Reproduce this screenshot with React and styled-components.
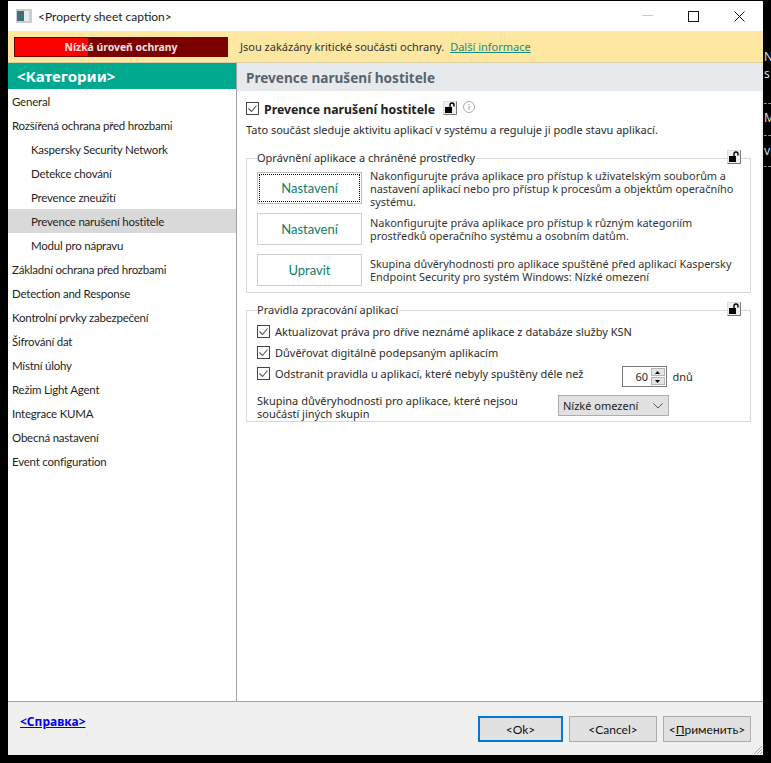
import React from 'react';
import styled, { createGlobalStyle } from 'styled-components';

const Global = createGlobalStyle`
  html, body { margin: 0; padding: 0; background: #000; width: 771px; height: 763px; overflow: hidden; }
  * { box-sizing: border-box; }
`;
const Screen = styled.div`
  display: flex; width: 771px; height: 763px; padding: 1px 0 8px 8px; background: #000;
  font-family: "Noto Sans", sans-serif; font-size: 11px; color: #2b2b2b;
`;
const Win = styled.div`
  width: 755px; flex: none; display: flex; flex-direction: column; background: #fff; position: relative;
`;
const Side = styled.div`
  flex: 1; min-width: 0; overflow: hidden; display: flex; flex-direction: column; color: #ddd; padding: 46px 0 0 1px;
`;
const Frag = styled.div`
  height: ${p => p.$h}px; flex: none; border-bottom: 1px dashed #999; padding-top: ${p => p.$pt}px; line-height: ${p => p.$lh || 14}px; font-size: 12px; white-space: pre-line;
`;
const Title = styled.div`
  height: 30px; display: flex; align-items: center; padding-left: 8px; font-size: 12px; color: #222; flex: none;
`;
const TitleText = styled.span` margin-left: 6px; font-family: Lato, sans-serif; font-size: 12px; `;
const WinBtns = styled.div` margin-left: auto; display: flex; align-items: center; padding-right: 1px; `;
const WinBtn = styled.div` width: 46px; height: 30px; display: flex; align-items: center; justify-content: center; `;
const Banner = styled.div`
  height: 32px; flex: none; background: #FEE8A1; border-bottom: 1px solid #d9cfa3; display: flex; align-items: center; padding-left: 6px; font-size: 11px; color: #333;
`;
const Level = styled.div`
  width: 214px; height: 20px; background: linear-gradient(90deg, #f00 0 73px, #7a0000 73px); border: 1px solid #7a0000;
  color: #f4e0e0; font-weight: 700; font-size: 10.4px; display: flex; align-items: center; justify-content: center; margin-right: 12px;
`;
const BannerLink = styled.a` color: #1d8a78; text-decoration: underline; margin-left: 6px; `;
const Main = styled.div` flex: 1; display: flex; min-height: 0; `;
const Nav = styled.div` width: 229px; flex: none; border-right: 1px solid #a0a0a0; display: flex; flex-direction: column; `;
const NavHead = styled.div`
  height: 26px; flex: none; background: #00A88E; color: #fff; font-weight: 700; font-size: 15px; display: flex; align-items: center; padding-left: 9px;
`;
const NavList = styled.div` display: flex; flex-direction: column; `;
const NavItem = styled.div`
  height: 24px; display: flex; align-items: center; padding-left: ${p => (p.$sub ? 23 : 4)}px; font-family: Lato, sans-serif; font-size: 11.5px; letter-spacing: -0.22px; color: #1f1f1f;
  background: ${p => (p.$on ? '#d9d9d9' : 'transparent')};
`;
const Content = styled.div` flex: 1; display: flex; flex-direction: column; min-width: 0; `;
const Head = styled.div`
  height: 28px; flex: none; background: #E6EAED; color: #59636b; font-weight: 700; font-size: 13.6px; display: flex; align-items: center; padding-left: 9px;
`;
const Body = styled.div` padding: 0 10px 0 9px; border-right: 2px solid #f2f2f2; flex: 1; `;
const CompRow = styled.div` display: flex; align-items: center; margin-top: 8px; height: 18px; `;
const CompName = styled.span` font-weight: 700; font-size: 12.3px; color: #222; margin-left: 5px; margin-right: 8px; position: relative; top: 1px; `;
const InfoIcon = styled.svg` margin-left: 6px; margin-top: -3px; `;
const Desc = styled.div` margin-top: 5px; line-height: 16px; `;
const Box = styled.fieldset`
  margin: ${p => p.$mt}px 0 0; padding: 0 9px 0 10px; border: 1px solid #d9d9d9; position: relative; min-width: 0; height: ${p => p.$h}px;
`;
const Leg = styled.legend` padding: 0 1px 0 0; font-size: 11px; line-height: 14px; `;
const LockAt = styled.div` position: absolute; right: 9px; top: -15px; `;
const Rows = styled.div` display: flex; flex-direction: column; gap: 9px; margin-top: 7px; `;
const BtnRow = styled.div` display: flex; align-items: center; height: 32px; `;
const LinkBtn = styled.div`
  width: 105px; height: 32px; flex: none; display: flex; align-items: center; justify-content: center; background: #fff; color: #0c7d6c; font-family: Lato, sans-serif; font-size: 13px;
  border: 1px solid #cfcfcf; ${p => p.$focus && 'outline: 1px dotted #000; outline-offset: -3px; border-color:#bbb;'}
`;
const BtnText = styled.div` margin-left: 8px; line-height: 13px; font-size: 10.9px; color: #333; white-space: nowrap; `;
const Checks = styled.div` margin-top: 4px; `;
const CheckRow = styled.div` display: flex; align-items: center; height: 21px; `;
const CheckLabel = styled.span` margin-left: 5px; white-space: nowrap; `;
const Spin = styled.div` margin-left: 38px; display: flex; align-items: center; width: 45px; height: 21px; flex: none; border: 1px solid #7a7a7a; justify-content: space-between; padding-left: 13px; position: relative; top: 3px; `;
const SpinBtns = styled.div` display: flex; flex-direction: column; gap: 1px; width: 15px; padding-right: 1px; `;
const SpinBtn = styled.div` height: 8px; background: #e4e4e4; border: 1px solid #b5b5b5; display: flex; align-items: center; justify-content: center; `;
const Days = styled.span` margin-left: 6px; position: relative; top: 3px; `;
const GroupRow = styled.div` display: flex; margin-top: 8px; `;
const GroupText = styled.div` width: 301px; line-height: 13px; margin-top: 2px; `;
const Select = styled.div`
  width: 111px; height: 21px; margin-top: 3px; background: #e1e1e1; border: 1px solid #adadad; display: flex; align-items: center; justify-content: space-between; padding: 0 5px 0 4px; color: #222;
`;
const Footer = styled.div`
  height: 54px; flex: none; background: #f0f0f0; border-top: 1px solid #a0a0a0; display: flex; align-items: flex-start; padding: 14px 12px 0 12px; position: relative;
`;
const Help = styled.a` color: #0000ee; font-weight: 700; font-size: 12px; text-decoration: underline; margin-top: -3px; `;
const Btns = styled.div` margin-left: auto; display: flex; gap: 6px; `;
const Btn = styled.div`
  height: 26px; width: ${p => p.$w}px; background: #e1e1e1; display: flex; align-items: center; justify-content: center; font-family: Lato, sans-serif; font-size: 12px; color: #111;
  border: ${p => (p.$def ? '2px solid #0078d7' : '1px solid #adadad')};
`;
const Grip = styled.svg` position: absolute; right: 0; bottom: 0; `;

const Check = () => (
  <svg width="13" height="13" viewBox="0 0 13 13"><rect x=".5" y=".5" width="12" height="12" fill="#fff" stroke="#444"/><path d="M2.5 6.5l3 3 5-6" fill="none" stroke="#555" strokeWidth="1.1"/></svg>
);
const Lock = () => (
  <svg width="14" height="14" viewBox="0 0 14 14"><rect x=".5" y=".5" width="13" height="13" fill="#eee" stroke="#ddd"/><path d="M13.5 .5v13h-13" fill="none" stroke="#777"/><rect x="2" y="6" width="7" height="6" fill="#000"/><path d="M7 6V4a2 2 0 014 0v1.500" fill="none" stroke="#000" strokeWidth="1.400"/></svg>
);

const items = [
  ['General'], ['Rozšířená ochrana před hrozbami'], ['Kaspersky Security Network', 1], ['Detekce chování', 1], ['Prevence zneužití', 1],
  ['Prevence narušení hostitele', 1, 1], ['Modul pro nápravu', 1], ['Základní ochrana před hrozbami'], ['Detection and Response'],
  ['Kontrolní prvky zabezpečení'], ['Šifrování dat'], ['Místní úlohy'], ['Režim Light Agent'], ['Integrace KUMA'], ['Obecná nastavení'], ['Event configuration'],
];

export default function App() {
  return (
    <Screen>
      <Global />
      <Win>
        <Title>
          <svg width="16" height="14" viewBox="0 0 16 14"><rect width="16" height="14" fill="#c9ced2"/><rect x="1" y="2" width="7" height="10" fill="#3f6f78"/><rect x="8" y="2" width="5" height="10" fill="#e8ecee"/></svg>
          <TitleText>&lt;Property sheet caption&gt;</TitleText>
          <WinBtns>
            <WinBtn><svg width="11" height="2"><rect width="11" height="1" fill="#ccc"/></svg></WinBtn>
            <WinBtn><svg width="11" height="11"><rect x=".5" y=".5" width="10" height="10" fill="none" stroke="#111"/></svg></WinBtn>
            <WinBtn><svg width="11" height="11"><path d="M.5 .5l10 10M10.500 .5l-10 10" stroke="#111"/></svg></WinBtn>
          </WinBtns>
        </Title>
        <Banner>
          <Level>Nízká úroveň ochrany</Level>
          Jsou zakázány kritické součásti ochrany.
          <BannerLink>Další informace</BannerLink>
        </Banner>
        <Main>
          <Nav>
            <NavHead>&lt;Категории&gt;</NavHead>
            <NavList>
              {items.map(([t, s, on]) => <NavItem key={t} $sub={s} $on={on}>{t}</NavItem>)}
            </NavList>
          </Nav>
          <Content>
            <Head>Prevence narušení hostitele</Head>
            <Body>
              <CompRow>
                <Check />
                <CompName>Prevence narušení hostitele</CompName>
                <Lock />
                <InfoIcon width="12" height="12" viewBox="0 0 12 12"><circle cx="6" cy="6" r="5.500" fill="none" stroke="#aaa"/><path d="M6 5v4M6 3v1" stroke="#999"/></InfoIcon>
              </CompRow>
              <Desc>Tato součást sleduje aktivitu aplikací v systému a reguluje ji podle stavu aplikací.</Desc>
              <Box $mt={13} $h={142}>
                <Leg>Oprávnění aplikace a chráněné prostředky</Leg>
                <LockAt><Lock /></LockAt>
                <Rows>
                  <BtnRow><LinkBtn $focus>Nastavení</LinkBtn><BtnText>Nakonfigurujte práva aplikace pro přístup k uživatelským souborům a<br />nastavení aplikací nebo pro přístup k procesům a objektům operačního<br />systému.</BtnText></BtnRow>
                  <BtnRow><LinkBtn>Nastavení</LinkBtn><BtnText>Nakonfigurujte práva aplikace pro přístup k různým kategoriím<br />prostředků operačního systému a osobním datům.</BtnText></BtnRow>
                  <BtnRow><LinkBtn>Upravit</LinkBtn><BtnText>Skupina důvěryhodnosti pro aplikace spuštěné před aplikací Kaspersky<br />Endpoint Security pro systém Windows: Nízké omezení</BtnText></BtnRow>
                </Rows>
              </Box>
              <Box $mt={10} $h={119}>
                <Leg>Pravidla zpracování aplikací</Leg>
                <LockAt><Lock /></LockAt>
                <Checks>
                  <CheckRow><Check /><CheckLabel>Aktualizovat práva pro dříve neznámé aplikace z databáze služby KSN</CheckLabel></CheckRow>
                  <CheckRow><Check /><CheckLabel>Důvěřovat digitálně podepsaným aplikacím</CheckLabel></CheckRow>
                  <CheckRow>
                    <Check /><CheckLabel>Odstranit pravidla u aplikací, které nebyly spuštěny déle než</CheckLabel>
                    <Spin>60<SpinBtns>
                      <SpinBtn><svg width="5" height="3"><path d="M2.500 0L5 3H0z" fill="#000"/></svg></SpinBtn>
                      <SpinBtn><svg width="5" height="3"><path d="M0 0h5L2.500 3z" fill="#000"/></svg></SpinBtn>
                    </SpinBtns></Spin>
                    <Days>dnů</Days>
                  </CheckRow>
                </Checks>
                <GroupRow>
                  <GroupText>Skupina důvěryhodnosti pro aplikace, které nejsou součástí jiných skupin</GroupText>
                  <Select>Nízké omezení<svg width="10" height="6"><path d="M.5 .5L5 5 9.500 .5" fill="none" stroke="#555"/></svg></Select>
                </GroupRow>
              </Box>
            </Body>
          </Content>
        </Main>
        <Footer>
          <Help>&lt;Справка&gt;</Help>
          <Btns>
            <Btn $def $w={85}>&lt;Ok&gt;</Btn>
            <Btn $w={88}>&lt;Cancel&gt;</Btn>
            <Btn $w={88}>&lt;<u>П</u>рименить&gt;</Btn>
          </Btns>
          <Grip width="12" height="12" viewBox="0 0 12 12"><path d="M11 3l-8 8M11 6l-5 5M11 9l-2 2" stroke="#aaa"/></Grip>
        </Footer>
      </Win>
      <Side>
        <Frag $h={57} $pt={1} $lh={17}>{'N\ns'}</Frag>
        <Frag $h={32} $pt={7}>Ma</Frag>
        <Frag $h={31} $pt={8}>vi</Frag>
      </Side>
    </Screen>
  );
}
